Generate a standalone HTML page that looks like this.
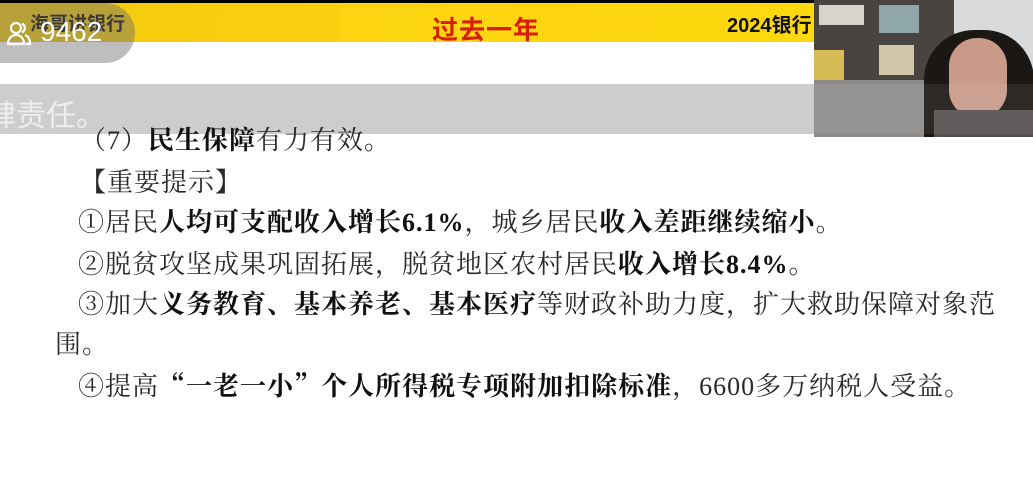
<!DOCTYPE html>
<html><head><meta charset="utf-8"><style>
body{margin:0;width:1033px;height:496px;overflow:hidden;background:#fff;position:relative;font-family:"Liberation Serif","Noto Serif CJK SC",serif}
.abs{position:absolute}
.line{position:absolute;font-size:26px;color:#2a2a2a;white-space:nowrap;line-height:30px;letter-spacing:1px}
b{font-weight:700;color:#111}
.q{font-family:"Noto Serif CJK SC",serif}
</style></head><body>
<div class="abs" style="left:0;top:0;width:1033px;height:3px;background:#000"></div>
<div class="abs" style="left:0;top:3px;width:814px;height:39px;background:linear-gradient(100deg,#f2c80c 0%,#fbd010 40%,#fbd010 100%)"></div>
<div class="abs" style="left:340px;top:3px;width:474px;height:39px;background:linear-gradient(100deg,#fcd412,#ffd90e)"></div>
<div class="abs" style="left:30px;top:9px;font:bold 19px 'Liberation Sans','Noto Sans CJK SC',sans-serif;color:#111">海哥讲银行</div>
<div class="abs" style="left:432px;top:10px;font:bold 26px 'Liberation Sans','Noto Sans CJK SC',sans-serif;color:#d81e06;letter-spacing:1px">过去一年</div>
<div class="abs" style="left:727px;top:9px;font:bold 20px 'Liberation Sans','Noto Sans CJK SC',sans-serif;color:#111">2024银行</div>
<div class="abs" style="left:-30px;top:3px;width:165px;height:60px;border-radius:0 30px 30px 0;background:rgba(110,110,110,0.45)"></div>
<svg class="abs" style="left:6px;top:20px" width="26" height="26" viewBox="0 0 26 26" fill="none" stroke="#fff" stroke-width="2.2"><circle cx="10" cy="8" r="5"/><path d="M2 24c0-6 4-9 8-9s8 3 8 9z"/><path d="M16 3.5a5 5 0 0 1 0 9M19 15c3 1 5 4 5 9h-4"/></svg>
<div class="abs" style="left:40px;top:16px;font:28px 'Liberation Sans',sans-serif;color:#fff">9462</div>
<div class="abs" style="left:0;top:84px;width:814px;height:50px;background:#cdcdcd"></div>
<div class="abs" style="left:-14px;top:91px;font:30px 'Liberation Sans','Noto Sans CJK SC',sans-serif;color:#eee">肆责任。</div>
<div class="abs" style="left:814px;top:0;width:219px;height:137px;background:#6f6c6a;overflow:hidden">
<div class="abs" style="left:0;top:0;width:140px;height:80px;background:#4a4440"></div>
<div class="abs" style="left:5px;top:5px;width:45px;height:20px;background:#d8d4cc"></div>
<div class="abs" style="left:65px;top:5px;width:40px;height:28px;background:#8fa6aa"></div>
<div class="abs" style="left:0;top:50px;width:30px;height:32px;background:#d7bc55"></div>
<div class="abs" style="left:65px;top:45px;width:35px;height:30px;background:#cfc7a8"></div>
<div class="abs" style="left:140px;top:0;width:79px;height:137px;background:#d8dadc"></div>
<div class="abs" style="left:0;top:80px;width:140px;height:57px;background:#8c8a88"></div>
<div class="abs" style="left:110px;top:30px;width:110px;height:120px;border-radius:50px 50px 0 0;background:#1b1715"></div>
<div class="abs" style="left:135px;top:38px;width:58px;height:80px;border-radius:28px;background:#c99a88"></div>
<div class="abs" style="left:120px;top:110px;width:99px;height:30px;background:#55504f"></div>
</div>
<div class="abs" style="left:814px;top:84px;width:219px;height:50px;background:rgba(255,255,255,0.08)"></div>
<div class="line" style="left:80px;top:126px">（7）<b>民生保障</b>有力有效。</div>
<div class="line" style="left:80px;top:168px">【重要提示】</div>
<div class="line" style="left:78px;top:208px">①居民<b>人均可支配收入增长6.1%</b>，城乡居民<b>收入差距继续缩小</b>。</div>
<div class="line" style="left:78px;top:250px">②脱贫攻坚成果巩固拓展，脱贫地区农村居民<b>收入增长8.4%</b>。</div>
<div class="line" style="left:78px;top:290px">③加大<b>义务教育、基本养老、基本医疗</b>等财政补助力度，扩大救助保障对象范</div>
<div class="line" style="left:55px;top:330px">围。</div>
<div class="line" style="left:78px;top:370px">④提高<b><span class="q">“</span>一老一小<span class="q">”</span>个人所得税专项附加扣除标准</b>，6600多万纳税人受益。</div>
</body></html>
